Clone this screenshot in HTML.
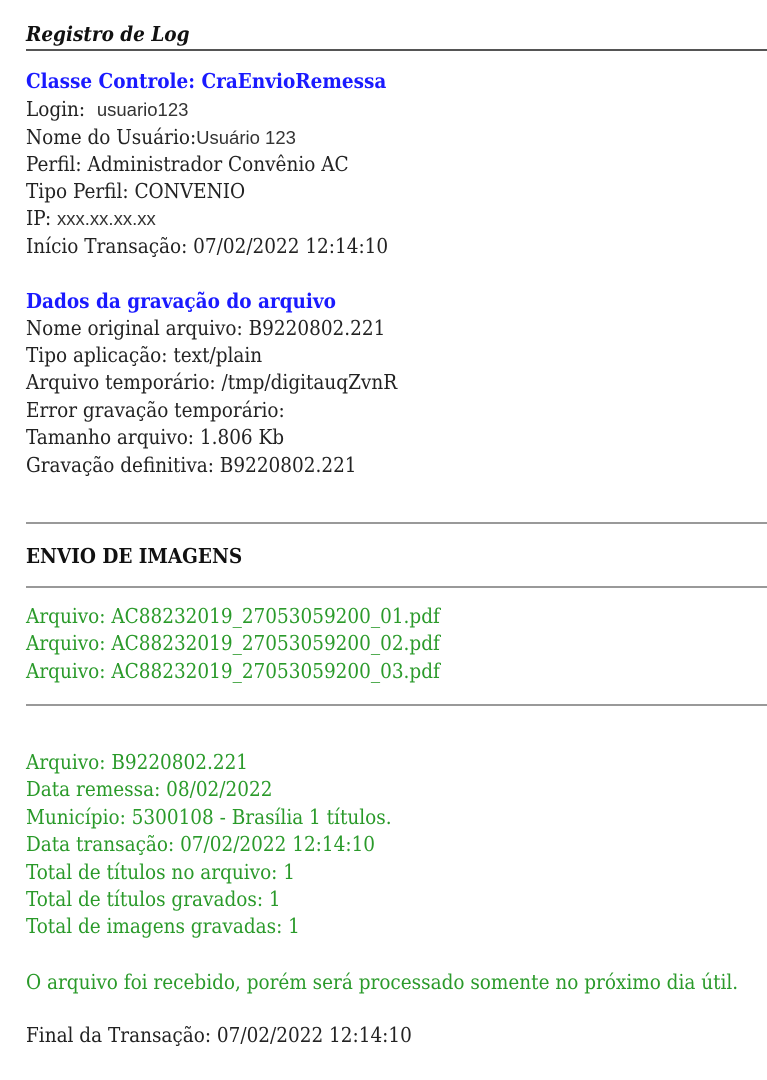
<!DOCTYPE html>
<html><head><meta charset="utf-8"><style>
body{margin:0;width:767px;height:1080px;background:#fff;position:relative;overflow:hidden;
font-family:"DejaVu Serif Condensed","DejaVu Serif",serif;font-stretch:condensed;font-size:20.5px;color:#222}
.l{position:absolute;left:26px;height:27px;line-height:27px;white-space:nowrap}
.b{color:#1a1aff;font-weight:bold}
.g{color:#2a9a2a}
.s{font-family:"Liberation Sans",sans-serif;font-stretch:normal;font-size:18.5px;color:#333}
.hr{position:absolute;left:26px;right:0;height:2px;background:#999}
</style></head><body>
<div class="l" style="top:21px;font-weight:bold;font-style:italic;color:#111">Registro de Log</div>
<div class="hr" style="top:49px;background:#555"></div>
<div class="l b" style="top:68px">Classe Controle: CraEnvioRemessa</div>
<div class="l" style="top:96px">Login:&nbsp; <span class="s">usuario123</span></div>
<div class="l" style="top:124px">Nome do Usuário:<span class="s">Usuário 123</span></div>
<div class="l" style="top:151px">Perfil: Administrador Convênio AC</div>
<div class="l" style="top:178px">Tipo Perfil: CONVENIO</div>
<div class="l" style="top:205px">IP: <span class="s">xxx.xx.xx.xx</span></div>
<div class="l" style="top:233px">Início Transação: 07/02/2022 12:14:10</div>
<div class="l b" style="top:288px">Dados da gravação do arquivo</div>
<div class="l" style="top:315px">Nome original arquivo: B9220802.221</div>
<div class="l" style="top:342px">Tipo aplicação: text/plain</div>
<div class="l" style="top:369px">Arquivo temporário: /tmp/digitauqZvnR</div>
<div class="l" style="top:397px">Error gravação temporário:</div>
<div class="l" style="top:424px">Tamanho arquivo: 1.806 Kb</div>
<div class="l" style="top:452px">Gravação definitiva: B9220802.221</div>
<div class="hr" style="top:522px"></div>
<div class="l" style="top:543px;font-weight:bold;color:#111">ENVIO DE IMAGENS</div>
<div class="hr" style="top:586px"></div>
<div class="l g" style="top:603px">Arquivo: AC88232019_27053059200_01.pdf</div>
<div class="l g" style="top:630px">Arquivo: AC88232019_27053059200_02.pdf</div>
<div class="l g" style="top:658px">Arquivo: AC88232019_27053059200_03.pdf</div>
<div class="hr" style="top:704px"></div>
<div class="l g" style="top:749px">Arquivo: B9220802.221</div>
<div class="l g" style="top:776px">Data remessa: 08/02/2022</div>
<div class="l g" style="top:804px">Município: 5300108 - Brasília 1 títulos.</div>
<div class="l g" style="top:831px">Data transação: 07/02/2022 12:14:10</div>
<div class="l g" style="top:859px">Total de títulos no arquivo: 1</div>
<div class="l g" style="top:886px">Total de títulos gravados: 1</div>
<div class="l g" style="top:913px">Total de imagens gravadas: 1</div>
<div class="l g" style="top:969px">O arquivo foi recebido, porém será processado somente no próximo dia útil.</div>
<div class="l" style="top:1022px">Final da Transação: 07/02/2022 12:14:10</div>
</body></html>
